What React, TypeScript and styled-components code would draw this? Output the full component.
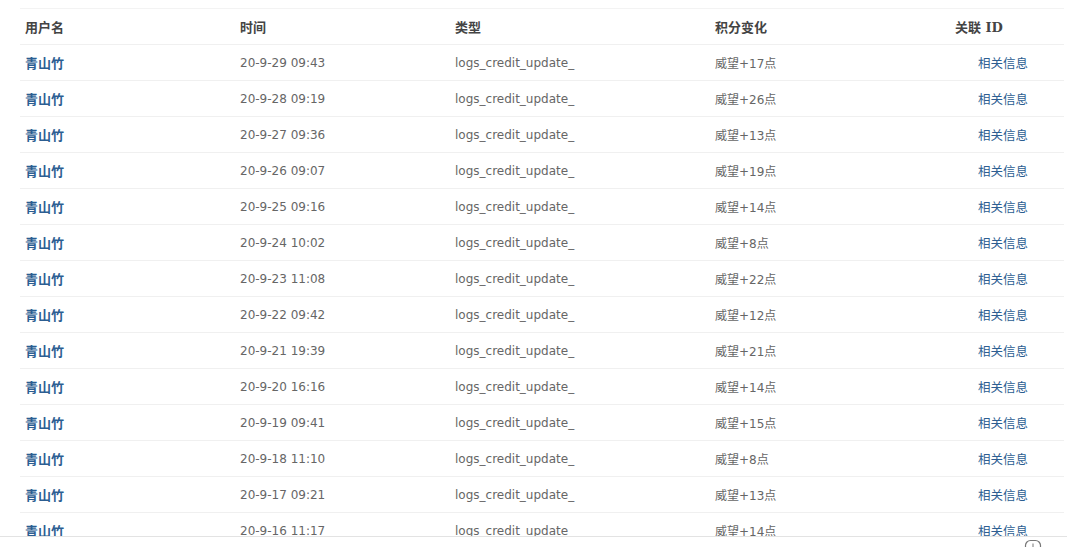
import React from "react";
import styled, { createGlobalStyle } from "styled-components";

const GlobalStyle = createGlobalStyle`
  html, body {
    margin: 0;
    padding: 0;
    background: #fff;
  }

  body {
    font-family: "DejaVu Sans", "Noto Sans CJK SC", sans-serif;
    font-size: 12px;
    color: #666;
  }
`;

interface ILog {
  time: string;
  amount: number;
}

const logs: ILog[] = [
  { time: "20-9-29 09:43", amount: 17 },
  { time: "20-9-28 09:19", amount: 26 },
  { time: "20-9-27 09:36", amount: 13 },
  { time: "20-9-26 09:07", amount: 19 },
  { time: "20-9-25 09:16", amount: 14 },
  { time: "20-9-24 10:02", amount: 8 },
  { time: "20-9-23 11:08", amount: 22 },
  { time: "20-9-22 09:42", amount: 12 },
  { time: "20-9-21 19:39", amount: 21 },
  { time: "20-9-20 16:16", amount: 14 },
  { time: "20-9-19 09:41", amount: 15 },
  { time: "20-9-18 11:10", amount: 8 },
  { time: "20-9-17 09:21", amount: 13 },
  { time: "20-9-16 11:17", amount: 14 },
];

export default function App() {
  return (
    <>
      <GlobalStyle />
      <Page>
        <Scroller>
          <Table>
            <colgroup>
              <col style={{ width: 215 }} />
              <col style={{ width: 215 }} />
              <col style={{ width: 260 }} />
              <col style={{ width: 240 }} />
              <col style={{ width: 114 }} />
            </colgroup>
            <thead>
              <tr>
                <Th>用户名</Th>
                <Th>时间</Th>
                <Th>类型</Th>
                <Th>积分变化</Th>
                <Th $serif>关联 ID</Th>
              </tr>
            </thead>
            <tbody>
              {logs.map((log, index) => (
                <tr key={index}>
                  <Td>
                    <UserLink href="#">青山竹</UserLink>
                  </Td>
                  <Td>{log.time}</Td>
                  <Td>logs_credit_update_</Td>
                  <Td>威望+{log.amount}点</Td>
                  <Td $indent>
                    <InfoLink href="#">相关信息</InfoLink>
                  </Td>
                </tr>
              ))}
            </tbody>
          </Table>
        </Scroller>
        <Footer>
          {/* only the top of the chat button peeks out under the list */}
          <ChatIcon width="18" height="8" viewBox="0 0 18 8">
            <rect x="1.5" y="1.5" width="15" height="14" rx="5" fill="none" stroke="#777" strokeWidth="1.2" />
            <line x1="9" y1="4.5" x2="9" y2="8" stroke="#777" strokeWidth="1" />
          </ChatIcon>
        </Footer>
      </Page>
    </>
  );
}

const Page = styled.div`
  width: 1067px;
  height: 547px;
  overflow: hidden;

  display: flex;
  flex-direction: column;
`;

const Scroller = styled.div`
  flex-shrink: 0;

  height: 536px;
  overflow: hidden;

  padding: 8px 0 0 20px;
  box-sizing: border-box;
`;

const Table = styled.table`
  width: 1044px;

  border-collapse: collapse;
  table-layout: fixed;
`;

const Th = styled.th<{ $serif?: boolean }>`
  height: 35px;
  padding: 0 0 0 5px;

  border-top: 1px solid #f3f3f3;

  text-align: left;
  vertical-align: middle;

  color: #444;
  font-family: ${(p) =>
    p.$serif
      ? `"DejaVu Serif", "Noto Sans CJK SC", serif`
      : `"DejaVu Sans", "Noto Sans CJK SC", sans-serif`};
  font-size: 13px;
  font-weight: bold;
`;

const Td = styled.td<{ $indent?: boolean }>`
  height: 35px;
  padding: 0 0 0 ${(p) => (p.$indent ? 28 : 5)}px;

  border-top: 1px solid #f0f0f0;

  vertical-align: middle;
  white-space: nowrap;

  color: #666;
  font-size: 12px;
`;

const UserLink = styled.a`
  color: #2c5e92;
  font-weight: bold;
  font-size: 13px;
  text-decoration: none;
`;

const InfoLink = styled.a`
  color: #2c5e92;
  font-size: 12.5px;
  text-decoration: none;
`;

const Footer = styled.div`
  flex: 1;
  min-height: 0;

  display: flex;
  justify-content: flex-end;
  align-items: flex-start;

  padding: 2px 25px 0 0;

  border-top: 1px solid #e3e3e3;
`;

const ChatIcon = styled.svg`
  display: block;
`;
